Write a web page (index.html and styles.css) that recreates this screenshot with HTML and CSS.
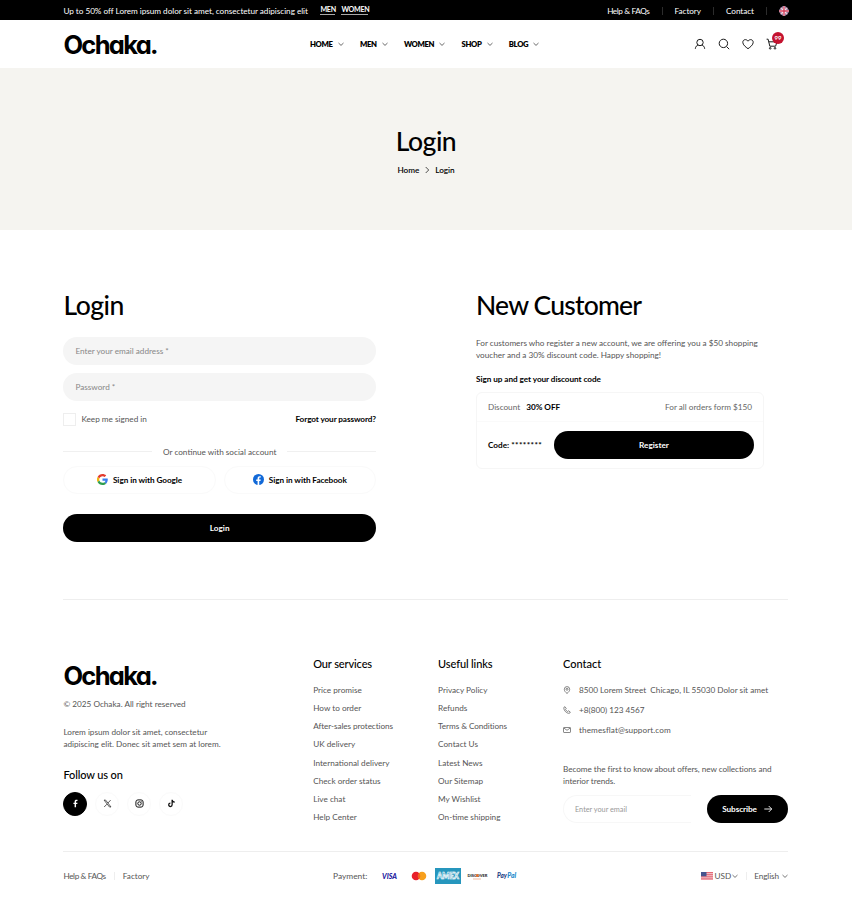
FILE: index.html
```html
<!DOCTYPE html>
<html lang="en">
<head>
<meta charset="utf-8">
<title>Login – Ochaka</title>
<link rel="stylesheet" href="styles.css">
</head>
<body>
<svg class="defs" aria-hidden="true">
  <symbol id="chev" viewBox="0 0 8 8"><path d="M1.500 3 4 5.400 6.500 3" fill="none" stroke="currentColor" stroke-width=".8"/></symbol>
</svg>
<div class="topbar"><div class="wrap bar">
  <p class="promo">Up to 50% off Lorem ipsum dolor sit amet, consectetur adipiscing elit</p>
  <a class="promo-link men">MEN</a><a class="promo-link women">WOMEN</a>
  <nav class="top-nav"><a class="faq">Help &amp; FAQs</a><a>Factory</a><a>Contact</a>
    <svg class="uk" viewBox="0 0 10 10"><circle cx="5" cy="5" r="4.700" fill="#6c5385"/><path d="m1.700 1.700 6.600 6.600m0-6.600L1.700 8.300" stroke="#eec5d0" stroke-width="1.300"/><path d="M5 .3v9.400M.3 5h9.400" stroke="#fff" stroke-width="2.600"/><path d="M5 .3v9.400M.3 5h9.400" stroke="#d33c5a" stroke-width="1.400"/></svg>
  </nav>
</div></div>
<header class="wrap header">
  <div class="logo">Ochaka.</div>
  <nav class="main-nav">
    <a>HOME</a><svg><use href="#chev"/></svg>
    <a>MEN</a><svg><use href="#chev"/></svg>
    <a>WOMEN</a><svg><use href="#chev"/></svg>
    <a>SHOP</a><svg><use href="#chev"/></svg>
    <a>BLOG</a><svg><use href="#chev"/></svg>
  </nav>
  <div class="tools">
    <svg viewBox="0 0 12 12"><circle cx="6" cy="4.500" r="3.200"/><path d="M1.300 10.800C1.500 8.500 2.800 7.400 4.300 7.100M10.700 10.800C10.500 8.500 9.200 7.400 7.700 7.100"/></svg>
    <svg viewBox="0 0 12 12"><circle cx="5.400" cy="5.400" r="4.200"/><path d="m8.500 8.500 2.700 2.700"/></svg>
    <svg viewBox="0 0 12 12"><path d="M6 10.700C3.800 9.100.8 6.900.8 4.300.8 1.400 4.400.6 6 3.200 7.600.6 11.200 1.400 11.200 4.300 11.200 6.900 8.200 9.100 6 10.700Z"/></svg>
    <div class="cart"><svg viewBox="0 0 12 12"><path d="M.6 1.200h1.500l1.700 7h5.800L11 3.800H2.800"/><circle cx="4.200" cy="10.300" r=".8"/><circle cx="9" cy="10.300" r=".8"/></svg><span class="badge">99</span></div>
  </div>
</header>
<section class="hero"><h1>Login</h1>
  <div class="crumbs"><a>Home</a><svg viewBox="0 0 8 8"><path d="M2.700 1 5.700 4 2.700 7" fill="none" stroke="#222" stroke-width=".8"/></svg><span>Login</span></div>
</section>
<main class="wrap main">
  <form class="login">
    <h2>Login</h2>
    <div class="field"><span>Enter your email address *</span></div>
    <div class="field"><span>Password *</span></div>
    <div class="keep"><i class="check"></i><span>Keep me signed in</span><a class="forgot">Forgot your password?</a></div>
    <div class="or"><span>Or continue with social account</span></div>
    <div class="social">
      <a><svg viewBox="0 0 48 48"><path fill="#e33b2e" d="M24 9.500c3.500 0 6.700 1.200 9.200 3.600l6.900-6.900C35.900 2.400 30.500 0 24 0 14.600 0 6.500 5.400 2.600 13.200l8 6.200C12.400 13.700 17.700 9.500 24 9.500z"/><path fill="#3a7cec" d="M47 24.500c0-1.600-.2-3.100-.4-4.500H24v9h12.900c-.6 3-2.300 5.500-4.700 7.200l7.700 6C44.400 38 47 31.800 47 24.500z"/><path fill="#f3b60b" d="M10.500 28.600a14.500 14.500 0 0 1 0-9.200l-8-6.200a24 24 0 0 0 0 21.600z"/><path fill="#2e9e4f" d="M24 48c6.500 0 11.900-2.100 15.900-5.800l-7.700-6c-2.200 1.500-4.900 2.300-8.200 2.300-6.300 0-11.600-4.200-13.500-9.900l-8 6.200C6.500 42.600 14.600 48 24 48z"/></svg><span>Sign in with Google</span></a>
      <a><svg viewBox="0 0 24 24"><circle cx="12" cy="12" r="12" fill="#1169d8"/><path fill="#fff" d="M10 24v-8.500H7V12h3V9.400C10 6.400 11.800 4.700 14.500 4.700c1.300 0 2.500.2 2.500.2v3h-1.500c-1.400 0-1.900.9-1.900 1.800V12h3.300l-.5 3.500h-2.800V24z"/></svg><span>Sign in with Facebook</span></a>
    </div>
    <button class="pill" type="button">Login</button>
  </form>
  <section class="new">
    <h2>New Customer</h2>
    <p class="offer">For customers who register a new account, we are offering you a $50 shopping<br>voucher and a 30% discount code. Happy shopping!</p>
    <p class="signup">Sign up and get your discount code</p>
    <div class="coupon">
      <div class="c-top"><span>Discount</span><b>30% OFF</b><span class="c3">For all orders form $150</span></div>
      <div class="c-bot"><b>Code: <span class="stars">********</span></b><button class="pill reg" type="button">Register</button></div>
    </div>
  </section>
</main>
<footer class="wrap footer">
  <div class="f-top">
    <div class="about">
      <div class="logo">Ochaka.</div>
      <p class="copy">© 2025 Ochaka. All right reserved</p>
      <p class="desc">Lorem ipsum dolor sit amet, consectetur<br>adipiscing elit. Donec sit amet sem at lorem.</p>
      <h3 class="follow">Follow us on</h3>
      <div class="socials">
        <a class="on"><svg viewBox="0 0 10 10"><path fill="#fff" d="M4 9.300V5.600H2.700V4.100H4V3C4 1.500 4.800.8 6.100.8h1.100v1.500h-.8c-.6 0-.8.3-.8.8v1h1.600L7 5.600H5.600v3.700z"/></svg></a>
        <a><svg viewBox="0 0 10 10"><path fill="none" stroke="#222" stroke-width=".8" d="M1.200 1.200h1.700l6 7.700H7.200zM8.500 1.200 5.600 4.400M4.400 5.700 1.300 8.900"/></svg></a>
        <a><svg viewBox="0 0 10 10" fill="none" stroke="#111" stroke-width="1.100"><rect x="1" y="1" width="8" height="8" rx="2.300"/><circle cx="5" cy="5" r="1.900"/><path d="M7 2.900h.6"/></svg></a>
        <a><svg viewBox="0 0 10 10" fill="none" stroke="#111" stroke-width="1.400"><path d="M5.700.7v5.800a1.900 1.900 0 1 1-1.900-1.900M5.700.8c.1 1.700 1.200 2.600 2.900 2.700"/></svg></a>
      </div>
    </div>
    <div class="links"><h3>Our services</h3><a>Price promise</a><a>How to order</a><a class="tight">After-sales protections</a><a>UK delivery</a><a>International delivery</a><a>Check order status</a><a>Live chat</a><a>Help Center</a></div>
    <div class="links"><h3>Useful links</h3><a>Privacy Policy</a><a>Refunds</a><a class="tight">Terms &amp; Conditions</a><a>Contact Us</a><a>Latest News</a><a>Our Sitemap</a><a>My Wishlist</a><a>On-time shipping</a></div>
    <div class="contact">
      <h3>Contact</h3>
      <div class="row"><svg viewBox="0 0 8 8"><path d="M4 7.500C2.500 6.200 1.300 5 1.300 3.300a2.700 2.700 0 0 1 5.400 0C6.700 5 5.500 6.200 4 7.500z"/><circle cx="4" cy="3.300" r="1"/></svg><span>8500 Lorem Street &nbsp;Chicago, IL 55030 Dolor sit amet</span></div>
      <div class="row"><svg viewBox="0 0 8 8"><path d="M.8 1.500 2 .7l1.200 1.800-.7.9c.4 1 1.100 1.700 2.100 2.200l.9-.8 1.800 1.200-.8 1.300C3.600 7.600.7 4.700.8 1.500z"/></svg><span>+8(800) 123 4567</span></div>
      <div class="row"><svg viewBox="0 0 8 8"><rect x=".5" y="1.500" width="7" height="5" rx=".6"/><path d="m.8 2 3.200 2.300L7.200 2"/></svg><span class="mail">themesflat@support.com</span></div>
      <p class="news">Become the first to know about offers, new collections and<br>interior trends.</p>
      <div class="sub"><div class="email"><span>Enter your email</span></div><button class="pill subb" type="button"><span>Subscribe</span><svg viewBox="0 0 10 10"><path d="M1.300 5h7.400M5.700 2l3 3-3 3" fill="none" stroke="#fff" stroke-width=".9"/></svg></button></div>
    </div>
  </div>
  <div class="f-bot">
    <div class="f-left"><a class="faq b1">Help &amp; FAQs</a><a>Factory</a></div>
    <div class="pay"><span class="b3">Payment:</span>
      <svg viewBox="0 0 26 16"><text x="5" y="11" textLength="15" lengthAdjust="spacingAndGlyphs" class="visa">VISA</text></svg>
      <svg viewBox="0 0 26 16"><path d="M13 4.900a4.300 4.300 0 1 0 0 6.200z" fill="#e8202b"/><path d="M13 4.900a4.300 4.300 0 1 1 0 6.200z" fill="#f7a01d"/><path d="M13 4.900a4.300 4.300 0 0 1 0 6.200 4.300 4.300 0 0 1 0-6.200z" fill="#f4641f"/></svg>
      <svg viewBox="0 0 26 16"><rect width="26" height="16" fill="#2696bd"/><text x="2" y="11.200" textLength="22" lengthAdjust="spacingAndGlyphs" class="amex">AMEX</text></svg>
      <svg viewBox="0 0 26 16"><text x="3.500" y="9.200" class="disc">DISCOVER</text><circle cx="13.200" cy="7.600" r="1.500" fill="#e5702a"/><path d="M9 11h8" stroke="#e9a27c" stroke-width=".7"/></svg>
      <svg viewBox="0 0 26 16"><text x="4" y="10" textLength="10" lengthAdjust="spacingAndGlyphs" class="pp">Pay</text><text x="14.200" y="10" textLength="9" lengthAdjust="spacingAndGlyphs" class="pp pal">Pal</text></svg>
    </div>
    <div class="f-right"><svg class="us" viewBox="0 0 12 8"><rect width="12" height="8" fill="#f3c6ca"/><path d="M0 .6h12M0 2.700h12M0 4.800h12M0 6.900h12" stroke="#e2606f" stroke-width="1"/><rect width="5.500" height="4.300" fill="#46558e"/></svg><span>USD</span><svg class="cv"><use href="#chev"/></svg><i></i><span class="eng">English</span><svg class="cv last"><use href="#chev"/></svg></div>
  </div>
</footer>
</body>
</html>
```
FILE: styles.css
```css
* { box-sizing: border-box; margin: 0; padding: 0; }
body { width: 852px; height: 900px; overflow: hidden; background: #fff; color: #000; font: 400 8.2px/12px Lato, "Liberation Sans", sans-serif; }
svg { display: block; flex: none; }
.defs { width: 0; height: 0; position: absolute; }
a, span, b { white-space: nowrap; }
b { font-weight: 700; }
.wrap { margin: 0 64px 0 63.4px; }
.topbar { background: #000; color: #fff; height: 20px; }
.bar { display: flex; align-items: center; height: 20px; padding-top: 1px; }
.promo { width: 257px; white-space: nowrap; letter-spacing: -.035px; }
.promo-link { font-weight: 700; font-size: 7.1px; line-height: 8px; border-bottom: 1px solid #aaa; letter-spacing: -.25px; }
.men { width: 15px; margin-right: 6px; }
.women { width: 27px; }
.top-nav { display: flex; align-items: center; margin-left: auto; margin-right: -1px; }
.top-nav a { border-right: 1px solid #2c2c2c; line-height: 8px; padding-right: 12px; margin-right: 12px; }
.top-nav a + a { letter-spacing: -.05px; }
.faq { letter-spacing: -.38px; }
.uk { width: 10px; height: 10px; }
.header { height: 48px; display: flex; align-items: center; }
.logo { font: 700 25.5px/30px Inter, Lato, sans-serif; font-feature-settings: "cv11"; letter-spacing: -1.7px; }
.header .logo { width: 246.6px; padding-top: 1px; }
.main-nav { display: flex; align-items: center; font-weight: 800; font-size: 7.7px; letter-spacing: -.35px; }
.main-nav svg { width: 8px; height: 8px; margin: 0 15.3px 0 4px; color: #444; }
.tools { display: flex; gap: 12px; margin-left: auto; margin-right: 10px; }
.tools svg { width: 12px; height: 12px; fill: none; stroke: #1b1b1b; stroke-width: 1; }
.cart { position: relative; }
.badge { position: absolute; left: 6px; top: -6px; width: 12px; height: 12px; border-radius: 50%; background: #c4122f; color: #fff; font: 700 6px/12px Lato, sans-serif; text-align: center; }
.hero { height: 162px; background: #f5f4f0; padding-top: 56px; text-align: center; }
h1, h2 { font-weight: 500; font-size: 26.5px; line-height: 34px; letter-spacing: -.5px; }
.new h2 { letter-spacing: -.8px; }
.crumbs { display: flex; justify-content: center; align-items: center; margin-top: 5.5px; font-weight: 600; letter-spacing: -.05px; }
.crumbs svg { width: 8px; height: 8px; margin: 0 4px; }
.main { display: flex; height: 370px; border-bottom: 1px solid #eee; padding-top: 57.5px; }
.login { width: 312.6px; margin-right: 100px; }
h2 { margin-bottom: 15.5px; }
.field { height: 28px; border-radius: 14px; background: #f5f5f5; padding: 8px 12px; margin-bottom: 8px; color: #888; }
.field + .field { margin-bottom: 12px; }
.keep { display: flex; align-items: center; color: #555; height: 12px; }
.check { width: 13px; height: 13px; border: 1px solid #eee; margin-right: 5px; }
.forgot { margin-left: auto; font-weight: 700; color: #000; letter-spacing: -.1px; }
.or { display: flex; align-items: center; gap: 11px; margin-top: 20.5px; color: #555; }
.or::before, .or::after { content: ""; flex: 1; height: 1px; background: #f0f0f0; }
.social { display: flex; gap: 8px; margin: 8px 0 20.500px; font-weight: 700; letter-spacing: -.06px; }
.social a { flex: 1; height: 28px; border: 1px solid #fafafa; border-radius: 14px; display: flex; align-items: center; justify-content: center; gap: 5px; }
.social svg { width: 11px; height: 11px; }
.pill { display: flex; align-items: center; justify-content: center; width: 100%; height: 28px; border: 0; border-radius: 14px; background: #000; color: #fff; font: 700 8.2px/12px Lato, sans-serif; }
.new { width: 288px; }
.offer { color: #555; }
.signup { font-weight: 700; margin: 12px 0 7px; letter-spacing: -.05px; }
.coupon { height: 77px; border: 1px solid #f6f6f6; border-radius: 6px; }
.c-top { display: flex; padding: 8px 11px; border-bottom: 1px solid #fafafa; height: 29px; color: #666; }
.c-top b { color: #000; margin-left: 6px; }
.c3 { margin-left: auto; }
.c-bot { display: flex; align-items: center; justify-content: space-between; padding: 9px 9px 0 11px; }
.stars { letter-spacing: .4px; }
.reg { width: 200px; }
.footer { color: #555; }
.f-top { display: flex; height: 252px; padding-top: 57px; border-bottom: 1px solid #eee; }
.about { width: 250px; padding-top: 4px; }
.footer .logo { color: #000; }
.copy { margin-top: 6.5px; }
.desc { margin-top: 16px; }
h3 { color: #000; font-weight: 500; font-size: 11px; line-height: 14px; white-space: nowrap; letter-spacing: -.12px; }
.follow { margin-top: 18px; }
.socials { display: flex; gap: 8px; margin-top: 10px; }
.socials a { width: 24px; height: 24px; border: 1px solid #fafafa; border-radius: 50%; display: grid; place-items: center; }
.socials .on { background: #000; border-color: #000; }
.socials svg { width: 9px; height: 9px; }
.links { width: 125px; display: flex; flex-direction: column; align-items: flex-start; }
.links h3 { margin-bottom: 10px; }
.links a { line-height: 18.15px; }
.links .tight { letter-spacing: -.08px; }
.contact { width: 225px; }
.contact h3 { margin-bottom: 13px; letter-spacing: 0; }
.row { display: flex; align-items: center; height: 12px; margin-bottom: 8px; }
.row svg { width: 8px; height: 8px; margin-right: 8px; fill: none; stroke: #555; stroke-width: .7; }
.mail { letter-spacing: .08px; }
.news { margin-top: 27px; letter-spacing: -.05px; white-space: nowrap; }
.sub { display: flex; margin-top: 8px; gap: 16px; }
.email { width: 128px; height: 28px; border: 1px solid #f7f7f7; border-right: 0; border-radius: 14px 0 0 14px; padding: 7.5px 11px; color: #999; font-size: 7.3px; }
.subb { width: 81px; gap: 6px; letter-spacing: -.1px; }
.subb svg { width: 10px; height: 10px; }
.f-bot { height: 48px; display: flex; align-items: center; }
.f-left { width: 269.6px; display: flex; line-height: 8px; }
.b1 { padding-right: 8px; margin-right: 8px; border-right: 1px solid #eee; }
.pay { display: flex; align-items: center; gap: 3px; }
.pay svg { width: 26px; height: 16px; }
.b3 { width: 35px; margin-right: 6px; font-size: 8.4px; }
.visa { font: italic 900 7.5px Lato, sans-serif; fill: #2320a0; }
.amex { font: 900 8.5px Lato, sans-serif; fill: none; stroke: #fff; stroke-width: .7; }
.disc { font: 800 4px Lato, sans-serif; fill: #333; }
.pp { font: italic 900 6.5px Lato, sans-serif; fill: #243d82; }
.pal { fill: #2389cc; }
.f-right { display: flex; align-items: center; margin-left: auto; margin-right: -1px; }
.us { width: 12px; height: 8px; margin-right: 2px; }
.cv { width: 8px; height: 8px; }
.last { margin-left: 2px; }
.eng { letter-spacing: -.1px; }
.f-right i { width: 1px; height: 8px; background: #eee; margin: 0 7px; }
```
